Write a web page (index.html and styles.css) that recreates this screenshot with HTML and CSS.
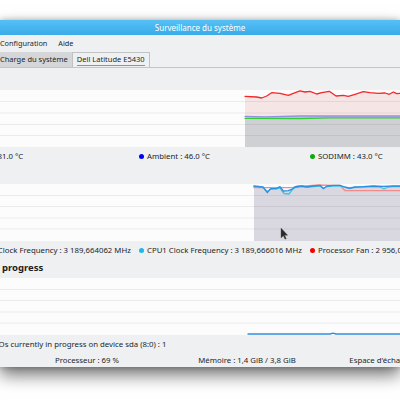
FILE: index.html
```html
<!DOCTYPE html>
<html lang="fr">
<head>
<meta charset="utf-8">
<title>Surveillance du système</title>
<link rel="stylesheet" href="styles.css">
</head>
<body>
<div class="desk">
  <div class="window">
    <div class="titlebar">Surveillance du système</div>
    <div class="menubar"><span>Configuration</span><span>Aide</span></div>
    <div class="tabbar">
      <div class="tab">Charge du système</div>
      <div class="tab active"><span class="tablabel">Dell Latitude E5430</span></div>
    </div>
    <div class="content">
      <section class="block">
        <div class="btitle"></div>
        <svg class="chart" viewBox="0 0 400 57" width="400" height="57">
          <rect width="400" height="57" fill="#fcfcfc"/>
          <polygon fill="#f6e5e5" points="245,6.3 256.7,7 261.7,8 266.7,6 271.7,2.7 280,3.3 288.3,5.3 293.3,3.3 300,0.9 305,2 310,1.3 316.7,4 321.7,2.7 329.3,1.3 336,6 343.3,5.3 348.3,6.3 355,4.3 363.3,1.7 370,2.7 378.3,3.3 385,3 389.3,4.3 393.3,2 396.7,3.7 400,3.3 400,26 300,26 265,26.8 245,26.3"/>
          <polygon fill="#cfd0d4" points="245,26.3 265,26.8 300,26 400,26 400,57 245,57"/>
          <g class="grid">
            <line x1="0" y1="11.5" x2="400" y2="11.5"/>
            <line x1="0" y1="23" x2="400" y2="23"/>
            <line x1="0" y1="34.5" x2="400" y2="34.5"/>
            <line x1="0" y1="45.5" x2="400" y2="45.5"/>
          </g>
          <polyline class="ln" stroke="#8f8fe8" points="245,26.3 265,26.8 300,26 400,26"/>
          <polyline class="ln" stroke="#34cc34" points="245,28.3 300,28.5 330,27.9 400,27.9"/>
          <polyline class="ln" stroke="#f42828" points="245,6.3 256.7,7 261.7,8 266.7,6 271.7,2.7 280,3.3 288.3,5.3 293.3,3.3 300,0.9 305,2 310,1.3 316.7,4 321.7,2.7 329.3,1.3 336,6 343.3,5.3 348.3,6.3 355,4.3 363.3,1.7 370,2.7 378.3,3.3 385,3 389.3,4.3 393.3,2 396.7,3.7 400,3.3"/>
        </svg>
        <div class="legend">
          <div class="item"><i class="dot red"></i>CPU : 81.0 °C</div>
          <div class="item"><i class="dot blue"></i>Ambient : 46.0 °C</div>
          <div class="item"><i class="dot green"></i>SODIMM : 43.0 °C</div>
        </div>
      </section>
      <section class="block">
        <div class="btitle"></div>
        <svg class="chart" viewBox="0 0 400 57" width="400" height="57">
          <rect width="400" height="57" fill="#fcfcfc"/>
          <polygon fill="#d9d8e0" points="254,2 263,3 267.3,7.5 270.7,4.7 276.7,4.3 280,2.7 283.3,7 288.3,6.7 291.7,5.3 295,3 297,2 301.7,2 306.7,3 313.3,2 318,1 323.3,4.5 327.3,2 333.3,1.3 340,1.3 345,3 350,4.3 355,3 363.3,2.7 373.3,2 383.3,2.3 393.3,2 400,2 400,57 254,57"/>
          <g class="grid">
            <line x1="0" y1="11.5" x2="400" y2="11.5"/>
            <line x1="0" y1="22.5" x2="400" y2="22.5"/>
            <line x1="0" y1="34" x2="400" y2="34"/>
            <line x1="0" y1="45" x2="400" y2="45"/>
          </g>
          <polyline class="ln" stroke="#f28c8c" points="254,3.7 293,3.7 297,2 305,1.8 318,1 334,1.3 340,1.3 345,6.7 400,6.7"/>
          <polyline class="ln" stroke="#3cc6ee" points="254,2.5 263,3.5 267.3,7.5 270.7,5 276.7,5 280,4 284,9.5 289,10 292,6 295,3.5 301.7,2.5 306.7,3.2 313.3,2.5 320,2 323.3,4 327.3,2.5 333.3,2 340,2 347,4 353,3.5 363.3,3 373.3,2.5 380,3 384,5 388,3 393.3,2.5 400,2.5"/>
          <polyline class="ln" stroke="#2e8ee0" points="254,2 263,3 267.3,8.7 270.7,4.7 276.7,4.3 280,2.7 283.3,7 288.3,6.7 291.7,5.3 295,3 301.7,2 306.7,3 313.3,2 320,1.3 323.3,4.7 327.3,2 333.3,1.3 340,1.3 345,3 350,4.3 355,3 363.3,2.7 373.3,2 383.3,2.3 393.3,2 400,2"/>
          <path class="cursor" d="M281 44 v10 l2.3 -2.2 l1.7 3.4 l1.3 -0.6 l-1.7 -3.3 h3.1 z"/>
        </svg>
        <div class="legend">
          <div class="item"><i class="dot navy"></i>CPU0 Clock Frequency : 3 189,664062 MHz</div>
          <div class="item"><i class="dot cyan"></i>CPU1 Clock Frequency : 3 189,666016 MHz</div>
          <div class="item"><i class="dot red"></i>Processor Fan : 2 956,0 RPM</div>
        </div>
      </section>
      <section class="block">
        <div class="btitle">progress</div>
        <svg class="chart" viewBox="0 0 400 57" width="400" height="57">
          <rect width="400" height="57" fill="#fcfcfc"/>
          <g class="grid">
            <line x1="0" y1="11.5" x2="400" y2="11.5"/>
            <line x1="0" y1="22.5" x2="400" y2="22.5"/>
            <line x1="0" y1="34" x2="400" y2="34"/>
            <line x1="0" y1="45" x2="400" y2="45"/>
          </g>
          <polyline class="ln" stroke="#2e8ee0" points="248,56 330,56 333,55.2 336,56 400,56"/>
        </svg>
        <div class="legend single">
          <div class="item"><i class="dot navy"></i>I/Os currently in progress on device sda (8:0) : 1</div>
        </div>
      </section>
    </div>
    <div class="statusbar">
      <span>Processeur : 69 %</span>
      <span>Mémoire : 1,4 GiB / 3,8 GiB</span>
      <span>Espace d'échange : 0 B / 3,9 GiB</span>
    </div>
  </div>
</div>
</body>
</html>
```
FILE: styles.css
```css
html, body {
  margin: 0;
  padding: 0;
  background: #ffffff;
}
body {
  font-family: "Noto Sans", "DejaVu Sans", sans-serif;
  font-size: 7.8px;
  color: #232629;
  width: 400px;
  height: 400px;
  overflow: hidden;
}
.desk {
  padding-top: 20px;
}
.window {
  width: 400px;
  background: #eff0f1;
  box-shadow: 0 0 6px rgba(0, 0, 0, 0.25), 0 8px 16px rgba(0, 0, 0, 0.55);
  overflow: hidden;
}
.titlebar {
  height: 15px;
  line-height: 15px;
  text-align: center;
  font-size: 8px;
  color: #ffffff;
  background: linear-gradient(#55c0f5, #3aabe9);
}
.menubar {
  height: 16px;
  display: flex;
  align-items: center;
  gap: 11px;
  font-size: 7.3px;
  white-space: nowrap;
}
.tabbar {
  height: 15px;
  padding-top: 1px;
  display: flex;
  margin-left: -5px;
  border-bottom: 1px solid #c3c5c7;
  font-size: 7.5px;
  white-space: nowrap;
}
.tab {
  height: 15px;
  line-height: 14px;
  padding: 0 4px 0 5px;
  background: #d5d6d8;
}
.tab.active {
  background: #eff0f1;
  border: 1px solid #c0c2c4;
  border-bottom: none;
  height: 14px;
  padding: 0 4px;
  line-height: 13px;
}
.tablabel {
  display: inline-block;
  border-bottom: 1px solid #3daee9;
  line-height: 11px;
}
.content {
  padding-top: 3px;
  display: flex;
  flex-direction: column;
}
.block {
  display: flex;
  flex-direction: column;
}
.btitle {
  height: 19px;
  line-height: 17px;
  padding-left: 2px;
  font-size: 9.5px;
  font-weight: bold;
  color: #1b1e20;
}
.chart {
  display: block;
  width: 400px;
  height: 57px;
}
.grid line {
  stroke: rgba(0, 0, 0, 0.065);
  stroke-width: 1;
}
.ln {
  fill: none;
  stroke-width: 1.3;
  stroke-linejoin: round;
  stroke-linecap: round;
}
.cursor {
  fill: #2a2a2a;
  stroke: #555;
  stroke-width: 0.4;
}
.legend {
  height: 18px;
  display: grid;
  grid-template-columns: repeat(3, 171px);
  align-items: center;
  margin-left: -32px;
  white-space: nowrap;
}
.legend.single {
  grid-template-columns: auto;
  margin-left: -15px;
}
.item {
  display: flex;
  align-items: center;
  gap: 3px;
}
.dot {
  display: inline-block;
  width: 5px;
  height: 5px;
  border-radius: 50%;
  flex: none;
}
.dot.red { background: #f00000; }
.dot.blue { background: #0000ff; }
.dot.green { background: #10a810; }
.dot.cyan { background: #1cb8e6; }
.dot.navy { background: #2e8ee0; }
.statusbar {
  height: 14px;
  display: grid;
  grid-template-columns: repeat(3, 160px);
  margin-left: 7px;
  align-items: center;
  text-align: center;
  white-space: nowrap;
}
```
